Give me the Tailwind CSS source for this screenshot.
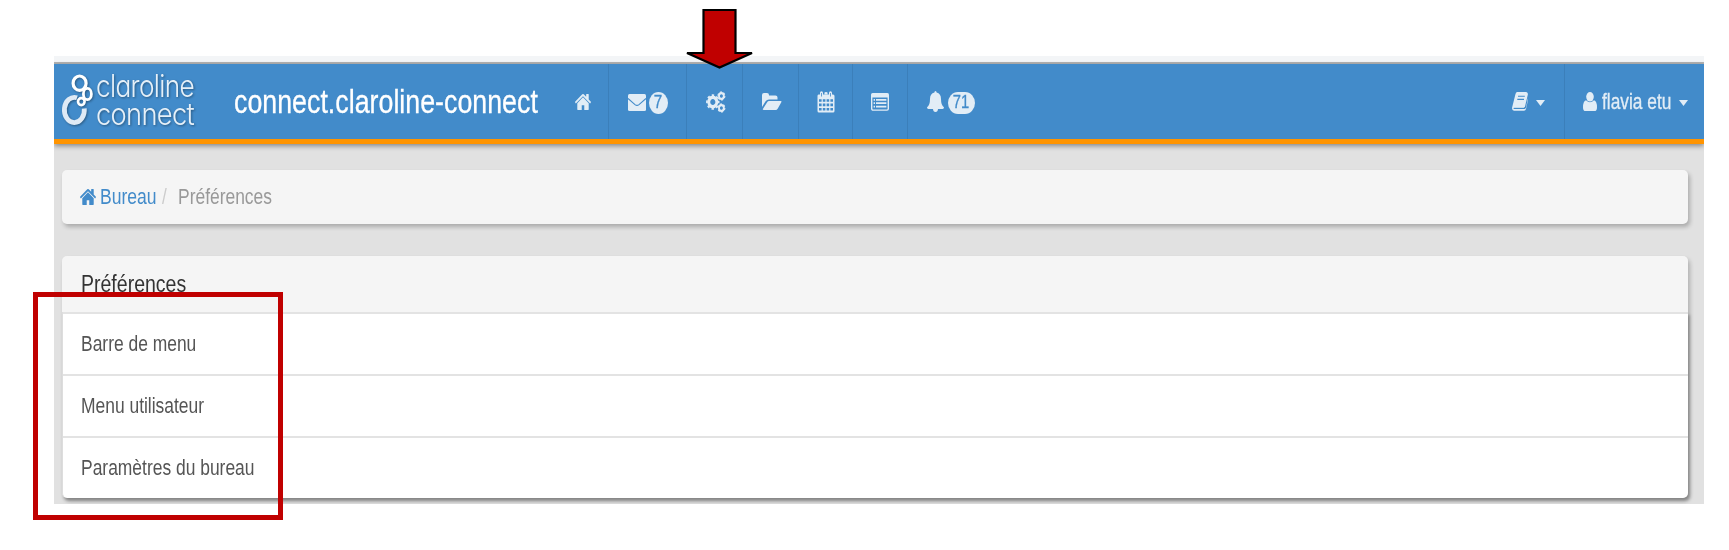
<!DOCTYPE html>
<html lang="fr">
<head>
<meta charset="utf-8">
<title>Préférences</title>
<script src="https://cdn.jsdelivr.net/npm/@tailwindcss/browser@4"></script>
</head>
<body class="bg-white font-['Liberation_Sans',Arial,sans-serif]">
<div class="relative w-[1729px] h-[550px] overflow-hidden pt-[56px] pl-[54px]">
  <div class="w-[1650px] h-[448px] bg-[#e1e1e1] overflow-hidden">
    <div class="h-[8px] bg-[#f3f5f7] border-b-2 border-[#b3b3b3]"></div>
    <header class="h-[80px] bg-[#428bca] border-b-[5px] border-[#ff9400] shadow-[0_2px_5px_rgba(0,0,0,0.4)] flex text-[#e2edf6]">
      <a class="w-[180px] shrink-0">
        <!-- Logo -->
        <svg class="block overflow-visible drop-shadow-[1px_1px_1px_rgba(0,0,0,0.35)]" width="150" height="75" viewBox="54 64 150 75" fill="none">
          <path d="M77 97.8A10 12.6 0 1 0 84.3 108.5" stroke="#dfeaf5" stroke-width="4.8"/>
          <ellipse cx="79.6" cy="83.2" rx="6.5" ry="7.2" stroke="#fff" stroke-width="3.2"/>
          <ellipse cx="87.4" cy="94" rx="4" ry="5.6" stroke="#fff" stroke-width="2.8"/>
          <ellipse cx="81.3" cy="101.6" rx="3.3" ry="3.5" stroke="#fff" stroke-width="2.6"/>
          <g class="font-['Inter',sans-serif] font-light tracking-[-0.8px]" fill="#e6f0f8" font-size="31" style="font-feature-settings:'cv11'">
            <text x="96" y="97" textLength="98" lengthAdjust="spacingAndGlyphs">claroline</text>
            <text x="96" y="125" textLength="98" lengthAdjust="spacingAndGlyphs">connect</text>
          </g>
        </svg>
      </a>
      <a class="w-[320px] h-[75px] shrink-0 flex items-center text-white text-[33px]"><span class="inline-block origin-left scale-x-[0.812] whitespace-nowrap [-webkit-text-stroke:0.3px_white]">connect.claroline-connect</span></a>
      <nav class="flex flex-1">
        <a class="w-[55px] border-r border-[#3b7fba] flex items-center pl-[21px]">
          <svg class="mt-px" width="16" height="16" viewBox="89 253 1614 1283" preserveAspectRatio="none" fill="currentColor"><path d="M1472 992v480q0 26-19 45t-45 19h-384v-384h-256v384h-384q-26 0-45-19t-19-45v-480q0-1 .5-3t.5-3l575-474 575 474q1 2 1 6zm223-69l-62 74q-8 9-21 11h-3q-13 0-21-7l-692-577-692 577q-12 8-24 7-13-2-21-11l-62-74q-8-10-7-23.5t11-21.5l719-599q32-26 76-26t76 26l244 204v-195q0-14 9-23t23-9h192q14 0 23 9t9 23v408l219 182q10 8 11 21.5t-7 23.5z"/></svg>
        </a>
        <a class="w-[78px] border-r border-[#3b7fba] flex items-center pl-[19px] gap-[3px]">
          <svg class="mt-px" width="18" height="17" viewBox="0 0 18 17"><rect width="18" height="17" rx="1.5" fill="currentColor"/><path d="M0 4.5L7 10.6Q9 12.2 11 10.6L18 4.5" fill="none" stroke="#428bca" stroke-width="1.1"/></svg>
          <span class="mt-[3px] w-[19px] h-[22px] rounded-[50%] bg-[#e2edf6] text-[#428bca] text-[18px] leading-[21px] text-center"><span class="inline-block scale-x-[0.85] [-webkit-text-stroke:0.3px_#428bca]">7</span></span>
        </a>
        <a class="w-[56px] border-r border-[#3b7fba] flex items-center pl-[19px]">
          <svg width="20" height="22" viewBox="0 0 20 22" fill="none" stroke="currentColor">
            <g transform="translate(6.8 11) scale(.86 1)"><circle r="4.7" stroke-width="3.4"/><circle r="6.8" stroke-width="2" stroke-dasharray="2.7 2.64" stroke-dashoffset="1.35"/></g>
            <g transform="translate(15.4 5) scale(.86 1)"><circle r="2.8" stroke-width="2.2"/><circle r="4" stroke-width="1.3" stroke-dasharray="2.1 2.09"/></g>
            <g transform="translate(15.4 17) scale(.86 1)"><circle r="2.8" stroke-width="2.2"/><circle r="4" stroke-width="1.3" stroke-dasharray="2.1 2.09"/></g>
          </svg>
        </a>
        <a class="w-[56px] border-r border-[#3b7fba] flex items-center pl-[19px]">
          <svg width="20" height="17" viewBox="0 0 20 17" fill="currentColor"><path d="M0 14V2Q0 0 2 0H5Q7 0 7 2V2.6H13.5Q15.5 2.6 15.5 4.6V6.6H7Q4.8 6.6 3.6 8.3L0 14ZM1 15.8L5 9.4Q5.8 8 7.2 8H18.8Q20 8 19.3 9.3L15.8 15.4Q15 16.9 13.6 16.9H1.6Q.4 16.9 1 15.8Z"/></svg>
        </a>
        <a class="w-[54px] border-r border-[#3b7fba] flex items-center pl-[18px]">
          <svg width="18" height="22" viewBox="0 0 18 22"><path fill="currentColor" d="M1.5 3.5H3V2Q3 .3 4.5 .3T6 2V3.5H7.5V2Q7.5 .3 9 .3T10.5 2V3.5H12V2Q12 .3 13.5 .3T15 2V3.5H16Q17.5 3.5 17.5 5V20Q17.5 21.5 16 21.5H2Q.5 21.5 .5 20V5Q.5 3.5 1.5 3.5Z"/>
            <g fill="#428bca"><path d="M2 8.2h2.6v2.6H2zM5.8 8.2h2.6v2.6H5.8zM9.6 8.2h2.6v2.6H9.6zM13.4 8.2h2.6v2.6h-2.6zM2 12.5h2.6v2.7H2zM5.8 12.5h2.6v2.7H5.8zM9.6 12.5h2.6v2.7H9.6zM13.4 12.5h2.6v2.7h-2.6zM2 17h2.6v2.6H2zM5.8 17h2.6v2.6H5.8zM9.6 17h2.6v2.6H9.6zM13.4 17h2.6v2.6h-2.6zM7.5 0h3v3.5h-3z"/><path d="M4.1 2h.8v3.4h-.8zM13.1 2h.8v3.4h-.8z"/></g><path d="M7.6 3.5V2Q7.6 1 9 1T10.4 2V3.5" fill="currentColor"/></svg>
        </a>
        <a class="w-[55px] border-r border-[#3b7fba] flex items-center pl-[18px]">
          <svg width="18" height="18" viewBox="0 0 18 18" fill="none" stroke="currentColor"><rect x=".7" y=".7" width="16.6" height="16.4" rx="1.3" stroke-width="1.4"/><path d="M.7 2.5H17.3" stroke-width="4"/><path d="M2.6 6.8H4M5 6.8H15.4M2.6 10.2H4M5 10.2H15.4M2.6 13.6H4M5 13.6H15.4" stroke-width="1.7"/></svg>
        </a>
        <a class="w-[90px] flex items-center pl-[19px] gap-[4px]">
          <svg width="17" height="21" viewBox="0 0 17 21" fill="currentColor"><path d="M8.5 0Q9.6 0 9.6 1.6Q14 2.8 14 8Q14 14.5 17 16.3Q17 18 15.6 18H11Q10.8 21 8.5 21T6 18H1.4Q0 18 0 16.3Q3 14.5 3 8Q3 2.8 7.4 1.6Q7.4 0 8.5 0Z"/></svg>
          <span class="mt-[3px] w-[27px] h-[22px] rounded-[10px/11px] bg-[#e2edf6] text-[#428bca] text-[18px] leading-[21px] text-center"><span class="inline-block scale-x-[0.82] [-webkit-text-stroke:0.3px_#428bca]">71</span></span>
        </a>
      </nav>
      <a class="w-[53px] border-r border-[#3b7fba] flex items-center gap-[8px]">
        <svg width="16" height="19" viewBox="0 0 16 19"><path fill="currentColor" d="M5.2 0H14.2Q16.3 .4 15.8 2.8L12.9 15Q12.6 16 11.6 16H2.6Q1.5 16 1.5 17H12.6Q13.6 17 14 15.6L16 6V8L14 17Q13.5 18.8 12 18.8H2Q-.3 18.6 .1 15.5L3.5 2Q4 .2 5.2 0Z"/><path d="M6 4.2H12.8M5.3 7.4H12" stroke="#428bca" stroke-width="1.1"/><path d="M1.8 16.3H12.4L13.6 14.4" fill="none" stroke="#428bca" stroke-width=".9"/></svg>
        <svg class="mt-[3px]" width="9" height="6" viewBox="0 0 9 6" fill="currentColor"><path d="M0 0H9L4.5 6Z"/></svg>
      </a>
      <a class="w-[139px] flex items-center pl-[18px] text-[21.4px]">
        <svg width="14" height="19" viewBox="0 0 14 19" fill="currentColor"><ellipse cx="7" cy="4.8" rx="3.8" ry="4.8"/><path d="M3 8.3Q7 12 11 8.3Q14 9.2 14 15.4Q14 19 11.3 19H2.7Q0 19 0 15.4Q0 9.2 3 8.3Z"/></svg>
        <span class="ml-[5px] mt-px w-[77px] whitespace-nowrap"><span class="inline-block origin-left scale-x-[0.81] [-webkit-text-stroke:0.3px_#e2edf6]">flavia etu</span></span>
        <svg class="mt-[3px]" width="9" height="6" viewBox="0 0 9 6" fill="currentColor"><path d="M0 0H9L4.5 6Z"/></svg>
      </a>
    </header>
    <ol class="mt-[26px] ml-[8px] w-[1626px] h-[54px] bg-[#f5f5f5] rounded-[5px] shadow-[2px_3px_4px_rgba(0,0,0,0.24)] flex items-center pl-[18px] pt-px text-[21.4px] whitespace-nowrap">
      <li class="flex items-center w-[82px] text-[#428bca]">
        <svg width="16" height="16" viewBox="89 253 1614 1283" preserveAspectRatio="none" fill="currentColor"><path d="M1472 992v480q0 26-19 45t-45 19h-384v-384h-256v384h-384q-26 0-45-19t-19-45v-480q0-1 .5-3t.5-3l575-474 575 474q1 2 1 6zm223-69l-62 74q-8 9-21 11h-3q-13 0-21-7l-692-577-692 577q-12 8-24 7-13-2-21-11l-62-74q-8-10-7-23.5t11-21.5l719-599q32-26 76-26t76 26l244 204v-195q0-14 9-23t23-9h192q14 0 23 9t9 23v408l219 182q10 8 11 21.5t-7 23.5z"/></svg>
        <span class="ml-[4px] w-[60px]"><span class="inline-block origin-left scale-x-[0.82]">Bureau</span></span>
      </li>
      <li class="w-[16px] text-[#ccc]"><span class="inline-block origin-left scale-x-[0.8]">/</span></li>
      <li class="text-[#999]"><span class="inline-block origin-left scale-x-[0.815]">Préférences</span></li>
    </ol>
    <section class="mt-[32px] ml-[8px] w-[1626px] rounded-[5px] shadow-[2px_3px_4px_rgba(0,0,0,0.22)]">
      <h1 class="h-[56px] bg-[#f5f5f5] rounded-t-[5px] flex items-center pl-[19px] text-[24.4px] text-[#333]"><span class="inline-block origin-left scale-x-[0.8]">Préférences</span></h1>
      <ul class="rounded-b-[5px] bg-white border-l border-[#ddd] shadow-[2px_3px_3px_rgba(0,0,0,0.25)] text-[21.4px] text-[#555]">
        <li class="h-[62px] border-t-2 border-[#e3e3e3] flex items-center pl-[18px] pt-px"><span class="inline-block origin-left scale-x-[0.815]">Barre de menu</span></li>
        <li class="h-[62px] border-t-2 border-[#e3e3e3] flex items-center pl-[18px] pt-px"><span class="inline-block origin-left scale-x-[0.815]">Menu utilisateur</span></li>
        <li class="h-[62px] border-t-2 border-[#e3e3e3] flex items-center pl-[18px] pt-px"><span class="inline-block origin-left scale-x-[0.815]">Paramètres du bureau</span></li>
      </ul>
    </section>
  </div>
  <!-- Annotations -->
  <div class="absolute left-[33px] top-[292px] w-[250px] h-[228px] border-[5px] border-[#c00000]"></div>
  <svg class="absolute left-[684px] top-[6px]" width="72" height="66" viewBox="684 6 72 66"><path d="M703.5 10H735.5V53H752L719.5 67.5L687 53H703.5Z" fill="#c00000" stroke="#000" stroke-width="2.2"/></svg>
</div>
</body>
</html>
